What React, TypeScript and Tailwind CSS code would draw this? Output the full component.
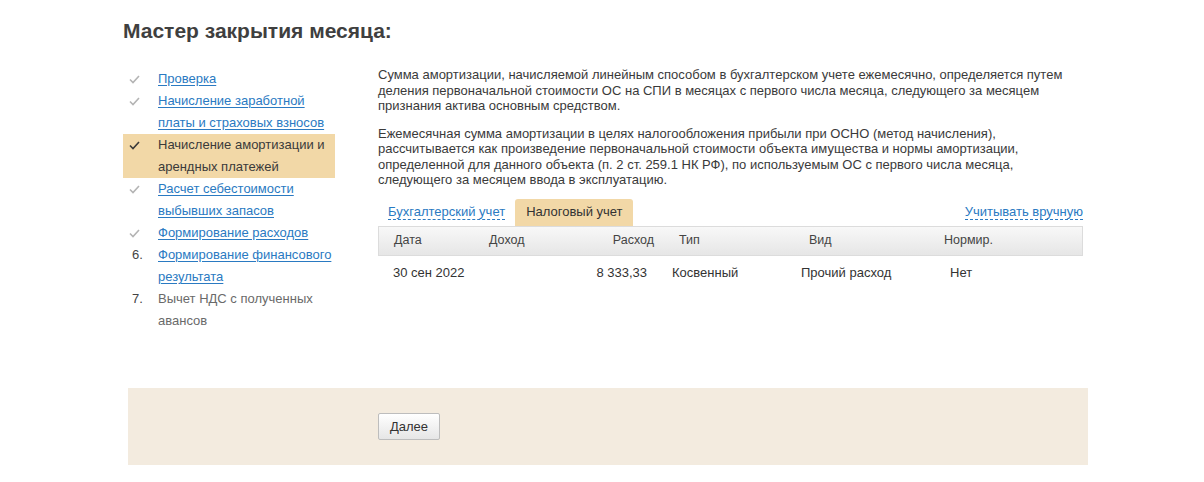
import React from "react";

type Step = {
  mark: "done" | "active" | number;
  lines: string[];
  link?: boolean;
};

const steps: Step[] = [
  { mark: "done", lines: ["Проверка"], link: true },
  { mark: "done", lines: ["Начисление заработной", "платы и страховых взносов"], link: true },
  { mark: "active", lines: ["Начисление амортизации и", "арендных платежей"] },
  { mark: "done", lines: ["Расчет себестоимости", "выбывших запасов"], link: true },
  { mark: "done", lines: ["Формирование расходов"], link: true },
  { mark: 6, lines: ["Формирование финансового", "результата"], link: true },
  { mark: 7, lines: ["Вычет НДС с полученных", "авансов"] },
];

const Check = ({ dark }: { dark?: boolean }) => (
  <svg width="11" height="9" viewBox="0 0 11 9" className="mt-[7px]">
    <polyline
      points="1,4.5 4,7.5 10,1"
      fill="none"
      stroke={dark ? "#3a3a3a" : "#b4b4b4"}
      strokeWidth="1.6"
    />
  </svg>
);

const App = () => {
  return (
    <div className="min-h-[482px] bg-white font-['Liberation_Sans',Arial,sans-serif] text-[#333]">
      <div className="pl-[123px] pt-[18px]">
        <h1 className="text-[21px] font-bold leading-[26px] text-[#3f3f3f]">
          Мастер закрытия месяца:
        </h1>

        <div className="mt-[24px] flex">
          {/* steps */}
          <ul className="w-[212px] text-[13px] leading-[22px]">
            {steps.map((s, i) => (
              <li
                key={i}
                className={
                  "flex " + (s.mark === "active" ? "bg-[#f2d8a7]" : "")
                }
              >
                <div className="flex w-[35px] shrink-0 justify-start pl-[6px]">
                  {typeof s.mark === "number" ? (
                    <span className="pl-[3px] text-[#444]">{s.mark}.</span>
                  ) : (
                    <Check dark={s.mark === "active"} />
                  )}
                </div>
                <div>
                  {s.lines.map((l, j) => (
                    <div key={j}>
                      {s.link ? (
                        <a className="text-[#2a7ac2] underline underline-offset-2" href="#">
                          {l}
                        </a>
                      ) : (
                        <span className={s.mark === "active" ? "text-[#3a3a3a]" : "text-[#6a6a6a]"}>
                          {l}
                        </span>
                      )}
                    </div>
                  ))}
                </div>
              </li>
            ))}
          </ul>

          {/* main */}
          <div className="ml-[43px] w-[705px]">
            <div className="-mt-[1px] w-[716px] text-[13px] leading-[15.5px] text-[#3a3a3a]">
              <p>
                Сумма амортизации, начисляемой линейным способом в бухгалтерском учете ежемесячно, определяется путем
                <br />
                деления первоначальной стоимости ОС на СПИ в месяцах с первого числа месяца, следующего за месяцем
                <br />
                признания актива основным средством.
              </p>
              <p className="mt-[12px]">
                Ежемесячная сумма амортизации в целях налогообложения прибыли при ОСНО (метод начисления),
                <br />
                рассчитывается как произведение первоначальной стоимости объекта имущества и нормы амортизации,
                <br />
                определенной для данного объекта (п. 2 ст. 259.1 НК РФ), по используемым ОС с первого числа месяца,
                <br />
                следующего за месяцем ввода в эксплуатацию.
              </p>
            </div>

            <div className="mt-[11px] flex items-end text-[13px]">
              <div className="flex h-[27px] items-center pl-[10px] pr-[10px]">
                <span className="border-b border-dashed border-[#2a7ac2] leading-[15px] text-[#2a7ac2]">
                  Бухгалтерский учет
                </span>
              </div>
              <div className="flex h-[27px] items-center rounded-t-[3px] bg-[#f2d8a7] pl-[11px] pr-[10px] text-[#333]">
                Налоговый учет
              </div>
              <div className="ml-auto flex h-[27px] items-center">
                <span className="border-b border-dashed border-[#2a7ac2] leading-[15px] text-[#2a7ac2]">
                  Учитывать вручную
                </span>
              </div>
            </div>

            <div className="flex h-[30px] items-center border border-[#dcdcdc] bg-gradient-to-b from-[#f8f8f8] to-[#e6e6e6] text-[12.5px] text-[#444]">
              <span className="w-[110px] pl-[15px]">Дата</span>
              <span className="w-[100px]">Доход</span>
              <span className="w-[65px] text-right">Расход</span>
              <span className="ml-[25px] w-[130px]">Тип</span>
              <span className="w-[135px]">Вид</span>
              <span>Нормир.</span>
            </div>

            <div className="flex h-[33px] items-center pt-[1px] text-[13px] text-[#333]">
              <span className="w-[169px] pl-[15px]">30 сен 2022</span>
              <span className="w-[100px] text-right">8 333,33</span>
              <span className="ml-[25px] w-[129px]">Косвенный</span>
              <span className="w-[149px]">Прочий расход</span>
              <span>Нет</span>
            </div>
          </div>
        </div>

        <div className="ml-[5px] mt-[56px] flex h-[77px] w-[960px] items-center bg-[#f3ebdf] pl-[250px]">
          <button className="h-[27px] w-[62px] rounded-[2px] border border-[#bdbdbd] bg-gradient-to-b from-white to-[#e6e6e6] text-[13px] text-[#333]">
            Далее
          </button>
        </div>
      </div>
    </div>
  );
};

export default App;
